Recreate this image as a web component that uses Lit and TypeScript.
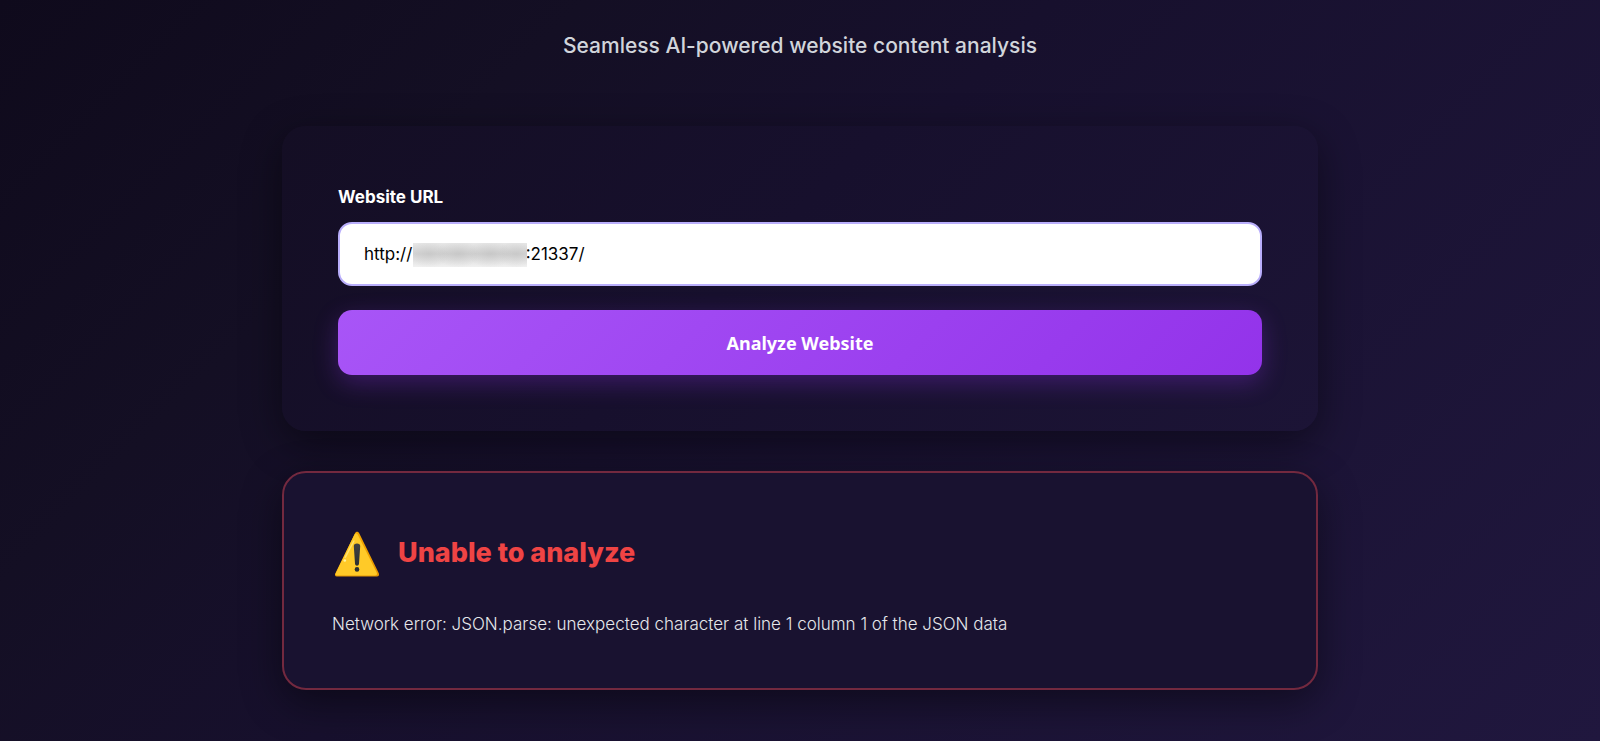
import { LitElement, html, css } from "lit";
import { customElement, state } from "lit/decorators.js";

@customElement("warning-icon")
class WarningIcon extends LitElement {
  static styles = css`
    :host { display: block; flex: none; width: 50px; height: 50px; }
    .icon { display: block; width: 100%; height: 100%; }
  `;
  render() {
    return html`<svg class="icon" viewBox="0 0 50 50" aria-hidden="true">
      <defs>
        <linearGradient id="edge" x1="0" y1="0" x2="0" y2="1">
          <stop offset="0" stop-color="#f2a600" />
          <stop offset="1" stop-color="#e59600" />
        </linearGradient>
        <linearGradient id="mark" x1="0" y1="0" x2="0" y2="1">
          <stop offset="0" stop-color="#424242" />
          <stop offset="1" stop-color="#2b2f31" />
        </linearGradient>
      </defs>
      <path d="M3.300 45.600 23 5.200c1-2 3.200-2 4.200 0L46.800 45.300c.9 1.800-.1 3.300-2 3.300H4.800c-1.800 0-2.300-1.500-1.500-3Z" fill="url(#edge)" />
      <path d="M3.700 45.300 22.500 6.600c.7-1.400 2.400-1.400 3.200-.1L44.700 44.500c.8 1.700 0 3-1.700 3H4.900c-1.500 0-1.900-.9-1.200-2.200Z" fill="#ffca28" />
      <path d="M21 13.300c.7-1.500 1.700-1.300 1.400.3L14.200 29.300c-.9 1.400-2.100.9-1.500-.6Z" fill="#fff59d" opacity=".6" />
      <circle cx="12.800" cy="32.500" r="1.300" fill="#fff59d" />
      <path d="M25 15.500c2.100 0 3.300.9 3.200 2.700l-1.200 17.600c-.2 2.600-3.800 2.600-4 0l-1.200-17.600c-.1-1.800 1.100-2.700 3.200-2.700Z" fill="url(#mark)" />
      <circle cx="25" cy="41.400" r="2.300" fill="#2b2f31" />
    </svg>`;
  }
}

@customElement("app-root")
class AppRoot extends LitElement {
  @state() private url = "http://" + "\u2003".repeat(6) + "\u2004\u2004:21337/";
  @state() private error =
    "Network error: JSON.parse: unexpected character at line 1 column 1 of the JSON data";

  static styles = css`
    :host {
      display: block;
      box-sizing: border-box;
      min-height: 100vh;
      padding: 28px 24px 51px;
      background: linear-gradient(135deg, #0f0a1c 0%, #140f24 25%, #17102d 45%, #20173e 100%);
      color: #fff;
      font-family: Inter, sans-serif;
    }
    .page { max-width: 1036px; margin: 0 auto; }
    .subtitle {
      margin: 0 0 62px;
      font-size: 21px;
      font-weight: 500;
      line-height: 36px;
      text-align: center;
      color: #d1d5db;
    }
    .card {
      box-sizing: border-box;
      border-radius: 24px;
      box-shadow: 0 12px 40px rgba(0, 0, 0, 0.45);
    }
    .form {
      display: flex;
      flex-direction: column;
      margin-bottom: 40px;
      padding: 56px;
      background: linear-gradient(135deg, #140e24, #17102d 45%, #1c1436);
    }
    .label { margin-bottom: 10px; font-size: 17px; font-weight: 700; line-height: 30px; }
    .field { position: relative; margin-bottom: 24px; }
    .input {
      box-sizing: border-box;
      display: block;
      width: 100%;
      height: 64px;
      padding: 0 24px;
      border: 2px solid #b9aefb;
      border-radius: 14px;
      outline: none;
      background: #fff;
      color: #000;
      font: 17px Inter, sans-serif;
    }
    .mask {
      position: absolute;
      top: 21px;
      left: 75px;
      width: 114px;
      height: 24px;
      background:
        radial-gradient(ellipse 20px 14px at 16px 11px, rgba(175, 175, 175, 0.3), transparent),
        radial-gradient(ellipse 22px 14px at 45px 11px, rgba(170, 170, 170, 0.3), transparent),
        radial-gradient(ellipse 22px 14px at 77px 11px, rgba(170, 170, 170, 0.3), transparent),
        radial-gradient(ellipse 18px 14px at 103px 11px, rgba(175, 175, 175, 0.3), transparent),
        linear-gradient(#e8e8e8, #d4d4d4 45%, #f1f1f1);
    }
    .submit {
      height: 65px;
      border: 0;
      border-radius: 14px;
      background: linear-gradient(135deg, #a855f7, #9333ea);
      box-shadow: 0 8px 24px rgba(147, 51, 234, 0.3);
      color: #fff;
      font: 700 18px "Noto Sans", sans-serif;
      cursor: pointer;
    }
    .alert {
      padding: 55px 48px 46px;
      border: 2px solid #73293f;
      background: #191230;
    }
    .heading { display: flex; align-items: center; gap: 16px; margin-bottom: 28px; }
    .title { margin: 0; font-size: 27px; font-weight: 800; line-height: 48px; color: #ef4444; }
    .message { margin: 0; font-size: 17px; font-weight: 350; line-height: 36px; color: #e5e7eb; }
  `;

  private onInput(e: Event) {
    this.url = (e.target as HTMLInputElement).value;
  }

  render() {
    return html`<main class="page">
      <p class="subtitle">Seamless AI-powered website content analysis</p>
      <form class="card form" @submit=${(e: Event) => e.preventDefault()}>
        <label class="label" for="url">Website URL</label>
        <div class="field">
          <input class="input" id="url" type="text" .value=${this.url} @input=${this.onInput} />
          <span class="mask"></span>
        </div>
        <button class="submit" type="submit">Analyze Website</button>
      </form>
      <section class="card alert" role="alert">
        <div class="heading">
          <warning-icon></warning-icon>
          <h2 class="title">Unable to analyze</h2>
        </div>
        <p class="message">${this.error}</p>
      </section>
    </main>`;
  }
}
